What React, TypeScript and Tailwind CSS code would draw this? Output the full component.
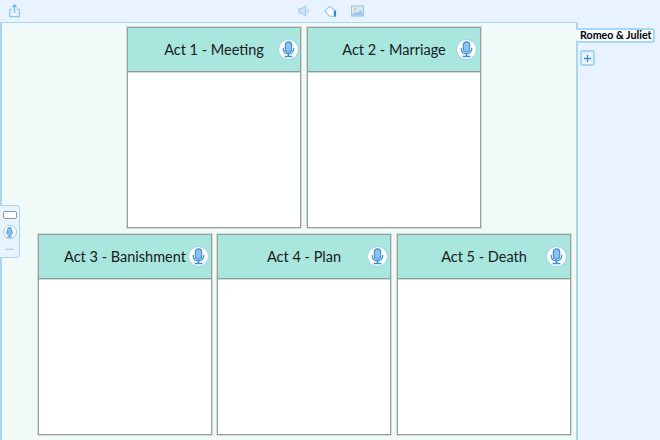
const topRow = [
  { title: 'Act 1 - Meeting', micRight: 'right-[1px]', offset: '' },
  { title: 'Act 2 - Marriage', micRight: 'right-[3px]', offset: '' },
];
const bottomRow = [
  { title: 'Act 3 - Banishment', micRight: 'right-[2px]', offset: '' },
  { title: 'Act 4 - Plan', micRight: 'right-[2px]', offset: '' },
  { title: 'Act 5 - Death', micRight: 'right-[3px]', offset: 'ml-px' },
];

function MicBadge({ size, icon }: { size: string; icon: string }) {
  return (
    <span className={`${size} flex shrink-0 items-center justify-center rounded-full border-[1.5px] border-[#9fd0f0] bg-white`}>
      <svg viewBox="0 0 16 16" className={icon} fill="none" stroke="#3b8fd6" strokeWidth="1.1" strokeLinecap="round">
        <rect x="5" y="0.8" width="6" height="9.8" rx="3" fill="#8cc2ec" />
        <path d="M3 6.800c0 3.300 2 5.300 5 5.300s5-2 5-5.300" />
        <path d="M8 12.100v2M5 14.600h6" strokeWidth="1.500" />
      </svg>
    </span>
  );
}

function ActCard({ title, micRight, offset }: { title: string; micRight: string; offset: string }) {
  return (
    <div className={`${offset} flex h-[201px] w-[174px] shrink-0 flex-col border border-[#96a09e] bg-white shadow-[0_0_0_1px_#d3dbd9]`}>
      <div className="relative flex h-[44px] items-center justify-center border-b border-[#8f9a98] bg-[#a9e6de] shadow-[0_1px_0_#d3dbd9]">
        <span className="text-[14.500px] whitespace-nowrap text-[#16201f]">{title}</span>
        <span className={`absolute top-[11px] ${micRight}`}>
          <MicBadge size="h-[21px] w-[21px]" icon="h-[17px] w-[17px]" />
        </span>
      </div>
    </div>
  );
}

export default function App() {
  return (
    <div className="flex h-[440px] w-[660px] flex-col overflow-hidden bg-[#e9f2ff] font-['Lato',sans-serif]">
      <div className="relative flex h-[22px] shrink-0 items-center">
        <svg viewBox="0 0 14 16" className="ml-[8px] h-[14px] w-[13px]" fill="none" stroke="#8cc4ee" strokeWidth="1.3">
          <path d="M4.500 6H1.500v8.500h11V6H9.500" />
          <path d="M7 10V1.200M4.600 3.400L7 1l2.400 2.400" stroke="#6fb4e8" />
        </svg>
        <div className="ml-[277px] flex items-center gap-[14px]">
          <svg viewBox="0 0 14 14" className="h-[14px] w-[12px]" fill="#cfe4f8" stroke="#8cc4ee" strokeWidth="1">
            <path d="M1 4.500h3L9 1v12L4 9.500H1z" />
            <path d="M11 4.500c1 1.400 1 3.600 0 5" fill="none" />
          </svg>
          <svg viewBox="0 0 14 14" className="h-[13px] w-[13px]" fill="none" stroke="#8cc4ee" strokeWidth="1.1">
            <path d="M0.800 6.500L6 1.500l5 4v6.500H6z" fill="#fff" />
            <path d="M10.800 6v6.500h2.200V6z" fill="#2f86d2" stroke="none" />
          </svg>
          <svg viewBox="0 0 14 12" className="h-[12px] w-[13px]" fill="#d6e9fa" stroke="#8cc4ee" strokeWidth="1">
            <rect x="0.500" y="0.500" width="13" height="11" />
            <circle cx="4.500" cy="3.800" r="1.500" fill="#f1c777" stroke="none" />
            <path d="M1 10l4-3.500 2.200 1.700L10 5l3.500 4.500v1.500H1z" fill="#9cc9ee" stroke="none" />
          </svg>
        </div>
      </div>

      <div className="relative flex min-h-0 flex-1">
        <div className="flex h-[440px] w-[578px] shrink-0 flex-col gap-[6px] rounded-tr-[2px] border-t border-r-2 border-l-2 border-[#a9d6f2] bg-[#f0fbf9] pt-[4px]">
          <div className="flex gap-[6px] pl-[125px]">
            {topRow.map((card) => (
              <ActCard key={card.title} {...card} />
            ))}
          </div>
          <div className="flex gap-[5px] pl-[36px]">
            {bottomRow.map((card) => (
              <ActCard key={card.title} {...card} />
            ))}
          </div>
        </div>

        <div className="flex flex-col items-start pt-[28px] pl-[2px]">
          <button className="flex h-[16px] w-[15px] items-center justify-center rounded-[3px] border-2 border-[#a9d6f2] bg-[#e9f2ff] text-[#3b8fd6]">
            <svg viewBox="0 0 10 10" className="h-[9px] w-[9px]" stroke="currentColor" strokeWidth="1.400">
              <path d="M5 1v8M1 5h8" />
            </svg>
          </button>
        </div>

        <div className="absolute top-[6px] left-[576px] flex h-[15px] w-[79px] items-center rounded-r-[3px] rounded-bl-[3px] border-2 border-l-0 border-[#a9d6f2] bg-[#f6fbff] pl-[4px] text-[10.700px] font-bold whitespace-nowrap text-black">
          Romeo &amp; Juliet
        </div>

        <div className="absolute top-[183px] left-0 flex h-[53px] w-[20px] flex-col items-center rounded-r-[4px] border border-l-0 border-[#a9d6f2] bg-[#e9f2ff] pt-[5px]">
          <span className="h-[8px] w-[14px] rounded-[2px] border border-[#8f9a98] bg-white" />
          <span className="mt-[6px]">
            <MicBadge size="h-[14px] w-[14px]" icon="h-[11px] w-[11px]" />
          </span>
          <span className="mt-[3px] text-[9px] leading-[10px] font-bold tracking-[0.500px] text-[#6fa9d8]">...</span>
        </div>
      </div>
    </div>
  );
}
